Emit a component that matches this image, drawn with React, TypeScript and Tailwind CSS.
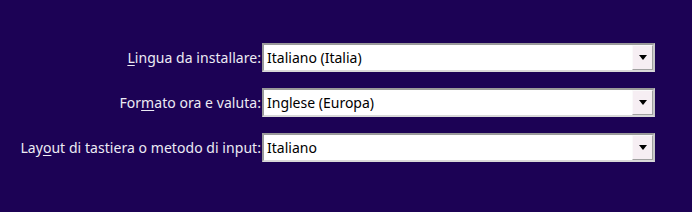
import React from 'react';

const rows = [
  { pre: '', key: 'L', post: 'ingua da installare:', value: 'Italiano (Italia)' },
  { pre: 'For', key: 'm', post: 'ato ora e valuta:', value: 'Inglese (Europa)' },
  { pre: 'Lay', key: 'o', post: 'ut di tastiera o metodo di input:', value: 'Italiano' },
];

function Combo({ value }: { value: string }) {
  return (
    <div className="flex h-[29px] w-[393px] border-2 border-t-[#9a9a9a] border-l-[#9a9a9a] border-b-[#d8d8d8] border-r-[#c8c8c8] bg-white">
      <div className="flex flex-1 items-center pl-[3px] text-[14px] text-black">{value}</div>
      <div className="flex w-[21px] items-center justify-center border border-t-[#fafafa] border-l-[#fafafa] border-b-[#a0a0a0] border-r-[#a0a0a0] bg-[#f6eef3]">
        <svg width="8" height="5" viewBox="0 0 8 5">
          <path d="M0 0h8L4 5z" fill="#000" />
        </svg>
      </div>
    </div>
  );
}

export default function App() {
  return (
    <div
      className="h-[212px] w-[692px] bg-[#1c0255] pt-[43px]"
      style={{ fontFamily: '"Noto Sans", "Open Sans", sans-serif' }}
    >
      <div className="grid grid-cols-[261px_393px] items-center gap-x-[1px] gap-y-[16px]">
        {rows.map((r) => (
          <React.Fragment key={r.value}>
            <div className="text-right text-[14px] tracking-[0.05px] text-[#ecebf4]">
              {r.pre}
              <span className="underline underline-offset-2">{r.key}</span>
              {r.post}
            </div>
            <Combo value={r.value} />
          </React.Fragment>
        ))}
      </div>
    </div>
  );
}
